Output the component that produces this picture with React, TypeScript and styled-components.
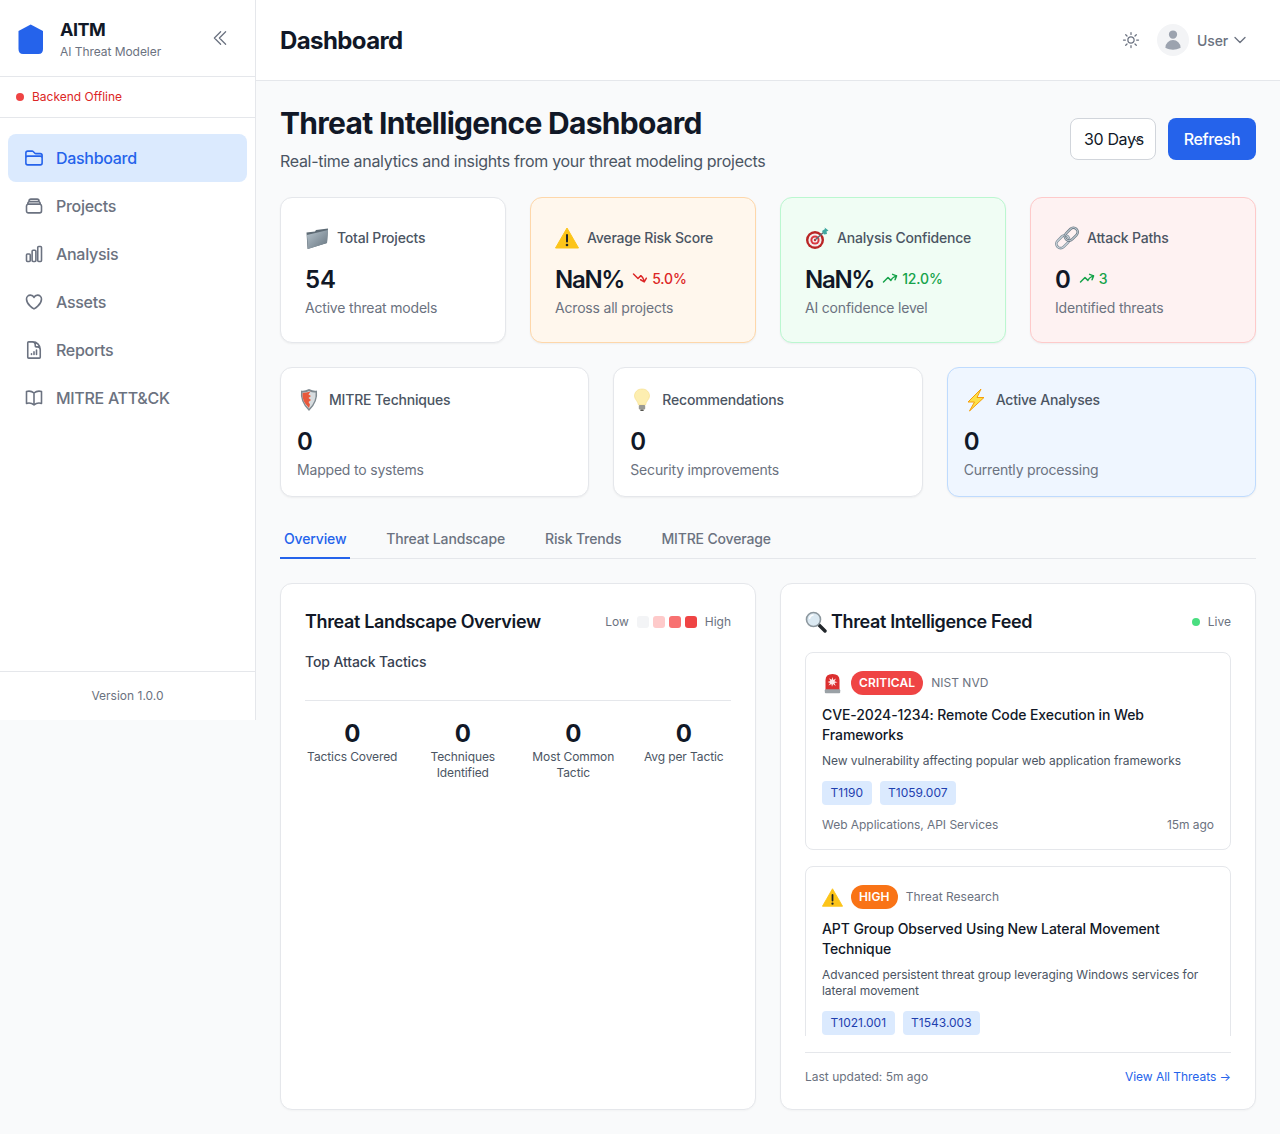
import styled, { createGlobalStyle } from "styled-components";
import {
    HiOutlineFolder,
    HiOutlineRectangleStack,
    HiOutlineChartBar,
    HiOutlineHeart,
    HiOutlineDocumentChartBar,
    HiOutlineBookOpen,
    HiOutlineChevronDoubleLeft,
    HiOutlineSun,
    HiOutlineChevronDown,
    HiOutlineArrowTrendingUp,
    HiOutlineArrowTrendingDown,
    HiUser,
} from "react-icons/hi2";

const GlobalStyle = createGlobalStyle`
    * { box-sizing: border-box; }
    body {
        margin: 0;
        background: #f9fafb;
        font-family: Inter, "Liberation Sans", sans-serif;
        color: #111827;
    }
`;

const Layout = styled.div`
    display: flex;
    align-items: flex-start;
    min-height: 1134px;
`;

const Sidebar = styled.aside`
    width: 256px;
    height: 720px;
    flex-shrink: 0;
    display: flex;
    flex-direction: column;
    background: #fff;
    border-right: 1px solid #e5e7eb;
`;

const Brand = styled.div`
    height: 77px;
    display: flex;
    align-items: center;
    gap: 12px;
    padding: 0 16px;
    border-bottom: 1px solid #e5e7eb;
`;

const BrandText = styled.div`
    flex: 1;
`;

const BrandName = styled.div`
    font-size: 18px;
    line-height: 28px;
    font-weight: 700;
    letter-spacing: -0.5px;
`;

const BrandSub = styled.div`
    font-size: 12px;
    line-height: 16px;
    letter-spacing: -0.05px;
    color: #6b7280;
`;

const Collapse = styled.span`
    display: flex;
    margin-right: 9px;
    color: #6b7280;
    font-size: 20px;
`;

const Status = styled.div`
    height: 41px;
    display: flex;
    align-items: center;
    gap: 8px;
    padding: 0 16px 1px;
    border-bottom: 1px solid #e5e7eb;
    font-size: 12px;
    line-height: 16px;
    color: #dc2626;
`;

const Dot = styled.span<{ $color: string }>`
    width: 8px;
    height: 8px;
    border-radius: 50%;
    background: ${(p) => p.$color};
`;

const Nav = styled.nav`
    flex: 1;
    padding: 16px 8px;
`;

const NavItem = styled.div<{ $active?: boolean }>`
    height: 48px;
    display: flex;
    align-items: center;
    gap: 12px;
    padding: 0 16px;
    border-radius: 8px;
    font-size: 16px;
    font-weight: 500;
    letter-spacing: -0.3px;
    color: ${(p) => (p.$active ? "#2563eb" : "#6b7280")};
    background: ${(p) => (p.$active ? "#dbeafe" : "transparent")};
    svg {
        font-size: 20px;
        stroke-width: 1.9;
    }
`;

const Version = styled.div`
    height: 49px;
    display: flex;
    align-items: center;
    justify-content: center;
    padding-bottom: 1px;
    border-top: 1px solid #e5e7eb;
    font-size: 12px;
    line-height: 16px;
    color: #6b7280;
`;

const Main = styled.div`
    flex: 1;
    min-width: 0;
`;

const TopBar = styled.header`
    height: 81px;
    display: flex;
    align-items: center;
    justify-content: space-between;
    padding: 0 24px;
    background: #fff;
    border-bottom: 1px solid #e5e7eb;
`;

const PageName = styled.h1`
    margin: 0;
    font-size: 24px;
    font-weight: 700;
    letter-spacing: -0.6px;
`;

const TopActions = styled.div`
    display: flex;
    align-items: center;
    color: #6b7280;
`;

const ThemeIcon = styled.span`
    display: flex;
    font-size: 20px;
    margin-right: 16px;
`;

const Avatar = styled.span`
    width: 32px;
    height: 32px;
    display: flex;
    align-items: center;
    justify-content: center;
    border-radius: 50%;
    background: #f3f4f6;
    color: #9ca3af;
    font-size: 22px;
    margin-right: 8px;
`;

const UserName = styled.span`
    font-size: 14px;
    font-weight: 500;
    letter-spacing: -0.15px;
    margin-right: 4px;
`;

const UserCaret = styled.span`
    display: flex;
    font-size: 16px;
    margin-right: 8px;
    svg {
        stroke-width: 2;
    }
`;

const Content = styled.main`
    padding: 24px;
`;

const Heading = styled.div`
    display: flex;
    align-items: center;
    justify-content: space-between;
    margin-bottom: 24px;
`;

const Title = styled.h2`
    margin: 0 0 8px;
    font-size: 30px;
    line-height: 36px;
    font-weight: 700;
    letter-spacing: -0.7px;
`;

const Subtitle = styled.p`
    margin: 0;
    font-size: 16px;
    line-height: 24px;
    letter-spacing: -0.31px;
    color: #4b5563;
`;

const HeadingActions = styled.div`
    display: flex;
    gap: 12px;
`;

const RangeSelect = styled.div`
    position: relative;
    width: 86px;
    height: 42px;
    display: flex;
    align-items: center;
    padding-left: 13px;
    background: #fff;
    border: 1px solid #d1d5db;
    border-radius: 8px;
    font-size: 16px;
    letter-spacing: -0.35px;
    svg {
        position: absolute;
        right: 13px;
        top: 16px;
        font-size: 10px;
        stroke-width: 2.6;
        color: #374151;
    }
`;

const RefreshButton = styled.button`
    width: 88px;
    height: 42px;
    border: none;
    border-radius: 8px;
    background: #2563eb;
    color: #fff;
    font-family: inherit;
    font-size: 16px;
    font-weight: 500;
    letter-spacing: -0.4px;
`;

const StatGrid = styled.div<{ $cols: number; $pad: number }>`
    display: grid;
    grid-template-columns: repeat(${(p) => p.$cols}, 1fr);
    gap: 24px;
    margin-bottom: 24px;
    --pad: ${(p) => p.$pad}px;
`;

const tones = {
    plain: ["#fff", "#e5e7eb"],
    orange: ["#fff7ed", "#fed7aa"],
    green: ["#f0fdf4", "#bbf7d0"],
    red: ["#fef2f2", "#fecaca"],
    blue: ["#eff6ff", "#bfdbfe"],
};

type Tone = keyof typeof tones;

const StatCard = styled.div<{ $tone: Tone }>`
    padding: var(--pad);
    border-radius: 12px;
    background: ${(p) => tones[p.$tone][0]};
    border: 1px solid ${(p) => tones[p.$tone][1]};
    box-shadow: 0 1px 2px rgba(0, 0, 0, 0.05);
`;

const StatHead = styled.div`
    height: 32px;
    display: flex;
    align-items: center;
    gap: 8px;
    margin-bottom: 8px;
    font-size: 14px;
    line-height: 20px;
    font-weight: 500;
    letter-spacing: -0.2px;
    color: #4b5563;
`;

const StatValueRow = styled.div`
    display: flex;
    align-items: center;
    gap: 8px;
    height: 32px;
    margin-bottom: 4px;
`;

const StatValue = styled.span<{ $tight: boolean }>`
    padding-top: 2px;
    font-size: 24px;
    font-weight: 600;
    letter-spacing: ${(p) => (p.$tight ? "-1.3px" : "0")};
`;

const Trend = styled.span<{ $up: boolean }>`
    display: flex;
    align-items: center;
    gap: 4px;
    font-size: 14px;
    font-weight: 500;
    letter-spacing: -0.15px;
    color: ${(p) => (p.$up ? "#16a34a" : "#dc2626")};
    svg {
        font-size: 16px;
        stroke-width: 2.2;
    }
`;

const StatSub = styled.div`
    font-size: 14px;
    line-height: 20px;
    letter-spacing: -0.19px;
    color: #6b7280;
`;

const Tabs = styled.div`
    display: flex;
    gap: 32px;
    border-bottom: 1px solid #e5e7eb;
    margin-bottom: 24px;
`;

const Tab = styled.div<{ $active?: boolean }>`
    padding: 8px 4px;
    margin-bottom: -1px;
    font-size: 14px;
    line-height: 20px;
    font-weight: 500;
    letter-spacing: -0.15px;
    color: ${(p) => (p.$active ? "#2563eb" : "#6b7280")};
    border-bottom: 2px solid ${(p) => (p.$active ? "#2563eb" : "transparent")};
`;

const Panels = styled.div`
    display: grid;
    grid-template-columns: 1fr 1fr;
    gap: 24px;
`;

const Panel = styled.section`
    padding: 24px;
    background: #fff;
    border: 1px solid #e5e7eb;
    border-radius: 12px;
    box-shadow: 0 1px 2px rgba(0, 0, 0, 0.03);
`;

const PanelHead = styled.div`
    height: 28px;
    display: flex;
    align-items: center;
    justify-content: space-between;
    margin-bottom: 16px;
`;

const PanelTitle = styled.h3`
    margin: 0;
    display: flex;
    align-items: center;
    gap: 4px;
    font-size: 18px;
    line-height: 28px;
    font-weight: 600;
    letter-spacing: -0.36px;
`;

const Legend = styled.div`
    display: flex;
    align-items: center;
    gap: 4px;
    font-size: 12px;
    line-height: 16px;
    color: #6b7280;
`;

const LegendLabel = styled.span<{ $side: "left" | "right" }>`
    margin-${(p) => p.$side}: 4px;
`;

const Swatch = styled.span<{ $color: string }>`
    width: 12px;
    height: 12px;
    border-radius: 3px;
    background: ${(p) => p.$color};
`;

const SectionLabel = styled.div`
    font-size: 14px;
    line-height: 20px;
    font-weight: 500;
    letter-spacing: -0.11px;
    color: #374151;
    margin-bottom: 28px;
`;

const Totals = styled.div`
    display: grid;
    grid-template-columns: repeat(4, 1fr);
    gap: 16px;
    padding-top: 16px;
    border-top: 1px solid #e5e7eb;
`;

const Total = styled.div`
    text-align: center;
`;

const TotalValue = styled.div`
    padding-top: 1px;
    margin-bottom: -1px;
    font-size: 24px;
    line-height: 32px;
    font-weight: 700;
`;

const TotalLabel = styled.div`
    font-size: 12px;
    line-height: 16px;
    letter-spacing: -0.1px;
    color: #4b5563;
`;

const LiveTag = styled.div`
    display: flex;
    align-items: center;
    gap: 8px;
    font-size: 12px;
    line-height: 16px;
    color: #6b7280;
`;

const Feed = styled.div`
    height: 384px;
    overflow: hidden;
    display: flex;
    flex-direction: column;
    gap: 16px;
`;

const ThreatCard = styled.article`
    flex-shrink: 0;
    padding: 16px;
    border: 1px solid #e5e7eb;
    border-radius: 8px;
`;

const ThreatHead = styled.div`
    height: 28px;
    display: flex;
    align-items: center;
    gap: 8px;
    margin-bottom: 8px;
`;

const Severity = styled.span<{ $color: string }>`
    padding: 4px 8px;
    border-radius: 999px;
    background: ${(p) => p.$color};
    color: #fff;
    font-size: 12px;
    line-height: 16px;
    font-weight: 600;
    letter-spacing: 0.12px;
`;

const Source = styled.span`
    font-size: 12px;
    line-height: 16px;
    color: #6b7280;
`;

const ThreatTitle = styled.h4`
    margin: 0 0 8px;
    font-size: 14px;
    line-height: 20px;
    font-weight: 500;
    letter-spacing: -0.1px;
`;

const ThreatDesc = styled.p`
    margin: 0 0 12px;
    font-size: 12px;
    line-height: 16px;
    letter-spacing: -0.04px;
    color: #4b5563;
`;

const TagRow = styled.div`
    display: flex;
    gap: 8px;
    margin-bottom: 12px;
`;

const Tag = styled.span`
    padding: 4px 8.5px;
    border-radius: 4px;
    background: #dbeafe;
    color: #1e40af;
    font-size: 12px;
    line-height: 16px;
`;

const ThreatFoot = styled.div`
    display: flex;
    justify-content: space-between;
    font-size: 12px;
    line-height: 16px;
    letter-spacing: -0.04px;
    color: #6b7280;
`;

const PanelFoot = styled.div`
    display: flex;
    align-items: center;
    justify-content: space-between;
    margin-top: 16px;
    padding-top: 16px;
    border-top: 1px solid #e5e7eb;
    font-size: 12px;
    line-height: 16px;
    color: #6b7280;
`;

const ViewAll = styled.a`
    color: #2563eb;
    letter-spacing: -0.03px;
`;

// hand drawn stand-ins for the emoji in the picture
const Shield = () => (
    <svg width="32" height="32" viewBox="0 0 32 32">
        <path d="M14.7 2.5 L27 9 L27 27 Q27 32 22.5 32 L7 32 Q2.5 32 2.5 27 L2.5 9 Z" fill="#2563eb" />
    </svg>
);

const FolderEmoji = () => (
    <svg width="24" height="24" viewBox="0 0 24 24">
        <defs>
            <linearGradient id="fld" x1="0" y1="0" x2="1" y2="1">
                <stop offset="0" stopColor="#b6c3cc" />
                <stop offset="1" stopColor="#66747f" />
            </linearGradient>
        </defs>
        <path d="M1.5 6.5 L10 5.5 L11 4 L23 2.5 L22 17 L2.5 23 Z" fill="#5e6b75" />
        <path d="M2 9 L23 4 L22 17 L3 23 Z" fill="url(#fld)" />
    </svg>
);

const WarningEmoji = ({ size = 24 }: { size?: number }) => (
    <svg width={size} height={size} viewBox="0 0 24 24">
        <path d="M12 2 L23.5 22 L0.5 22 Z" fill="#fcc419" stroke="#fcc419" strokeLinejoin="round" />
        <rect x="11" y="8" width="2" height="8.5" rx="1" fill="#1f2328" />
        <circle cx="12" cy="19" r="1.3" fill="#1f2328" />
    </svg>
);

const TargetEmoji = () => (
    <svg width="24" height="24" viewBox="0 0 24 24">
        <circle cx="10" cy="14" r="9" fill="#b92525" />
        <circle cx="10" cy="14" r="6.6" fill="#f4eeee" />
        <circle cx="10" cy="14" r="4.6" fill="#d9363e" />
        <circle cx="10" cy="14" r="2.6" fill="#f4eeee" />
        <circle cx="10" cy="14" r="1.2" fill="#c92a2a" />
        <path d="M10 14 L19 6" stroke="#5c6b73" strokeWidth="1.4" />
        <path d="M17 5 L20 3 L19.6 1.5 L23.5 4.5 L21.5 5.6 L22 8 L19 8.5 Z" fill="#3fa7a0" />
    </svg>
);

const LinkEmoji = () => (
    <svg width="24" height="24" viewBox="0 0 24 24" fill="none">
        <rect x="0.5" y="11.5" width="14.5" height="8.5" rx="4.2" transform="rotate(-45 7.7 15.7)" stroke="#7f8f9b" strokeWidth="2.6" />
        <rect x="0.5" y="11.5" width="14.5" height="8.5" rx="4.2" transform="rotate(-45 7.7 15.7)" stroke="#d4dde3" strokeWidth="1" />
        <rect x="9" y="4" width="14.5" height="8.5" rx="4.2" transform="rotate(-45 16.2 8.2)" stroke="#6d7b86" strokeWidth="2.6" />
        <rect x="9" y="4" width="14.5" height="8.5" rx="4.2" transform="rotate(-45 16.2 8.2)" stroke="#c3ced6" strokeWidth="1" />
    </svg>
);

const ShieldEmoji = () => (
    <svg width="24" height="24" viewBox="0 0 24 24">
        <path d="M12 1 Q17 3.5 20 2.5 Q21.5 14 12 23 Q2.5 14 4 2.5 Q7 3.5 12 1 Z" fill="#7f8a91" />
        <path d="M12 3 Q16 5 18.6 4.4 Q19.4 13.5 12 20.8 Q4.6 13.5 5.4 4.4 Q8 5 12 3 Z" fill="#d7dcdf" />
        <path d="M5.6 5 Q9 5 13.5 3.6 L11.5 6.5 L14 8 L11.5 10 L14 12 L11.5 14 L13 16.5 L12 20 Q4.5 13 5.6 5 Z" fill="#e8593c" />
    </svg>
);

const BulbEmoji = () => (
    <svg width="24" height="24" viewBox="0 0 24 24">
        <path d="M12 1 C17 1 19.5 4.5 19.5 8 C19.5 11.5 16 13 15.5 17 L8.5 17 C8 13 4.5 11.5 4.5 8 C4.5 4.5 7 1 12 1 Z" fill="#fdeeb0" stroke="#f5dc85" strokeWidth="0.6" />
        <rect x="8.8" y="17" width="6.4" height="4.5" rx="1" fill="#9a9a94" />
        <rect x="10.2" y="21.5" width="3.6" height="1.6" rx="0.8" fill="#55554f" />
    </svg>
);

const BoltEmoji = () => (
    <svg width="24" height="24" viewBox="0 0 24 24">
        <path d="M17 1 L4 14 L10.5 14 L5.5 23 L20 9.5 L13 9.5 Z" fill="#fde047" stroke="#f59e0b" strokeWidth="1" strokeLinejoin="round" />
    </svg>
);

const SearchEmoji = () => (
    <svg width="22" height="22" viewBox="0 0 22 22">
        <path d="M13 13 L20 20" stroke="#22272b" strokeWidth="3.4" strokeLinecap="round" />
        <circle cx="8.5" cy="8.5" r="7" fill="#dbe9f2" stroke="#8c979e" strokeWidth="1.6" />
        <path d="M4.5 8 A4.5 4.5 0 0 1 8.5 4" fill="none" stroke="#fff" strokeWidth="1.4" />
    </svg>
);

const SirenEmoji = () => (
    <svg width="21" height="21" viewBox="0 0 21 21">
        <path d="M3.5 17 L3.5 7 Q3.5 1 10.5 1 Q17.5 1 17.5 7 L17.5 17 Z" fill="#dc2f2f" />
        <rect x="2.8" y="16.2" width="15.4" height="4" rx="1" fill="#9aa1a6" />
        <path d="M10.5 4 L11.3 7 L14 5.5 L12.5 8.3 L15.5 9.2 L12.5 10 L13.7 13 L11.1 11 L10 13.8 L9.4 11 L6.5 12.6 L8.1 10 L5.5 9 L8.3 8 L7.1 5.2 L9.7 6.8 Z" fill="#fde8e8" />
    </svg>
);

const navItems = [
    { label: "Dashboard", Icon: HiOutlineFolder, active: true },
    { label: "Projects", Icon: HiOutlineRectangleStack },
    { label: "Analysis", Icon: HiOutlineChartBar },
    { label: "Assets", Icon: HiOutlineHeart },
    { label: "Reports", Icon: HiOutlineDocumentChartBar },
    { label: "MITRE ATT&CK", Icon: HiOutlineBookOpen },
];

type Stat = {
    label: string;
    value: string;
    sub: string;
    tone: Tone;
    icon: React.ReactNode;
    trend?: { up: boolean; text: string };
};

const topStats: Stat[] = [
    { label: "Total Projects", value: "54", sub: "Active threat models", tone: "plain", icon: <FolderEmoji /> },
    { label: "Average Risk Score", value: "NaN%", sub: "Across all projects", tone: "orange", icon: <WarningEmoji />, trend: { up: false, text: "5.0%" } },
    { label: "Analysis Confidence", value: "NaN%", sub: "AI confidence level", tone: "green", icon: <TargetEmoji />, trend: { up: true, text: "12.0%" } },
    { label: "Attack Paths", value: "0", sub: "Identified threats", tone: "red", icon: <LinkEmoji />, trend: { up: true, text: "3" } },
];

const lowerStats: Stat[] = [
    { label: "MITRE Techniques", value: "0", sub: "Mapped to systems", tone: "plain", icon: <ShieldEmoji /> },
    { label: "Recommendations", value: "0", sub: "Security improvements", tone: "plain", icon: <BulbEmoji /> },
    { label: "Active Analyses", value: "0", sub: "Currently processing", tone: "blue", icon: <BoltEmoji /> },
];

type Threat = {
    icon: React.ReactNode;
    severity: string;
    color: string;
    source: string;
    title: string;
    desc: string;
    tags: string[];
    affected?: string;
    time?: string;
};

// the second card runs under the bottom of the feed, so its footer never shows
const threats: Threat[] = [
    {
        icon: <SirenEmoji />,
        severity: "CRITICAL",
        color: "#ef4444",
        source: "NIST NVD",
        title: "CVE-2024-1234: Remote Code Execution in Web Frameworks",
        desc: "New vulnerability affecting popular web application frameworks",
        tags: ["T1190", "T1059.007"],
        affected: "Web Applications, API Services",
        time: "15m ago",
    },
    {
        icon: <WarningEmoji size={21} />,
        severity: "HIGH",
        color: "#f97316",
        source: "Threat Research",
        title: "APT Group Observed Using New Lateral Movement Technique",
        desc: "Advanced persistent threat group leveraging Windows services for lateral movement",
        tags: ["T1021.001", "T1543.003"],
    },
];

const StatBlock = ({ stat }: { stat: Stat }) => (
    <StatCard $tone={stat.tone}>
        <StatHead>
            {stat.icon}
            {stat.label}
        </StatHead>
        <StatValueRow>
            <StatValue $tight={stat.value.length > 2}>{stat.value}</StatValue>
            {stat.trend && (
                <Trend $up={stat.trend.up}>
                    {stat.trend.up ? <HiOutlineArrowTrendingUp /> : <HiOutlineArrowTrendingDown />}
                    {stat.trend.text}
                </Trend>
            )}
        </StatValueRow>
        <StatSub>{stat.sub}</StatSub>
    </StatCard>
);

export default function App() {
    return (
        <Layout>
            <GlobalStyle />
            <Sidebar>
                <Brand>
                    <Shield />
                    <BrandText>
                        <BrandName>AITM</BrandName>
                        <BrandSub>AI Threat Modeler</BrandSub>
                    </BrandText>
                    <Collapse>
                        <HiOutlineChevronDoubleLeft />
                    </Collapse>
                </Brand>
                <Status>
                    <Dot $color="#ef4444" />
                    Backend Offline
                </Status>
                <Nav>
                    {navItems.map(({ label, Icon, active }) => (
                        <NavItem key={label} $active={active}>
                            <Icon />
                            {label}
                        </NavItem>
                    ))}
                </Nav>
                <Version>Version 1.0.0</Version>
            </Sidebar>
            <Main>
                <TopBar>
                    <PageName>Dashboard</PageName>
                    <TopActions>
                        <ThemeIcon>
                            <HiOutlineSun />
                        </ThemeIcon>
                        <Avatar>
                            <HiUser />
                        </Avatar>
                        <UserName>User</UserName>
                        <UserCaret>
                            <HiOutlineChevronDown />
                        </UserCaret>
                    </TopActions>
                </TopBar>
                <Content>
                    <Heading>
                        <div>
                            <Title>Threat Intelligence Dashboard</Title>
                            <Subtitle>Real-time analytics and insights from your threat modeling projects</Subtitle>
                        </div>
                        <HeadingActions>
                            <RangeSelect>
                                30 Days
                                <HiOutlineChevronDown />
                            </RangeSelect>
                            <RefreshButton>Refresh</RefreshButton>
                        </HeadingActions>
                    </Heading>
                    <StatGrid $cols={4} $pad={24}>
                        {topStats.map((s) => (
                            <StatBlock key={s.label} stat={s} />
                        ))}
                    </StatGrid>
                    <StatGrid $cols={3} $pad={16}>
                        {lowerStats.map((s) => (
                            <StatBlock key={s.label} stat={s} />
                        ))}
                    </StatGrid>
                    <Tabs>
                        <Tab $active>Overview</Tab>
                        <Tab>Threat Landscape</Tab>
                        <Tab>Risk Trends</Tab>
                        <Tab>MITRE Coverage</Tab>
                    </Tabs>
                    <Panels>
                        <Panel>
                            <PanelHead>
                                <PanelTitle>Threat Landscape Overview</PanelTitle>
                                <Legend>
                                    <LegendLabel $side="right">Low</LegendLabel>
                                    <Swatch $color="#f3f4f6" />
                                    <Swatch $color="#fecaca" />
                                    <Swatch $color="#f87171" />
                                    <Swatch $color="#ef4444" />
                                    <LegendLabel $side="left">High</LegendLabel>
                                </Legend>
                            </PanelHead>
                            <SectionLabel>Top Attack Tactics</SectionLabel>
                            <Totals>
                                <Total>
                                    <TotalValue>0</TotalValue>
                                    <TotalLabel>Tactics Covered</TotalLabel>
                                </Total>
                                <Total>
                                    <TotalValue>0</TotalValue>
                                    <TotalLabel>Techniques Identified</TotalLabel>
                                </Total>
                                <Total>
                                    <TotalValue>0</TotalValue>
                                    <TotalLabel>Most Common Tactic</TotalLabel>
                                </Total>
                                <Total>
                                    <TotalValue>0</TotalValue>
                                    <TotalLabel>Avg per Tactic</TotalLabel>
                                </Total>
                            </Totals>
                        </Panel>
                        <Panel>
                            <PanelHead>
                                <PanelTitle>
                                    <SearchEmoji />
                                    Threat Intelligence Feed
                                </PanelTitle>
                                <LiveTag>
                                    <Dot $color="#4ade80" />
                                    Live
                                </LiveTag>
                            </PanelHead>
                            <Feed>
                                {threats.map((t) => (
                                    <ThreatCard key={t.title}>
                                        <ThreatHead>
                                            {t.icon}
                                            <Severity $color={t.color}>{t.severity}</Severity>
                                            <Source>{t.source}</Source>
                                        </ThreatHead>
                                        <ThreatTitle>{t.title}</ThreatTitle>
                                        <ThreatDesc>{t.desc}</ThreatDesc>
                                        <TagRow>
                                            {t.tags.map((tag) => (
                                                <Tag key={tag}>{tag}</Tag>
                                            ))}
                                        </TagRow>
                                        {t.affected && (
                                            <ThreatFoot>
                                                <span>{t.affected}</span>
                                                <span>{t.time}</span>
                                            </ThreatFoot>
                                        )}
                                    </ThreatCard>
                                ))}
                            </Feed>
                            <PanelFoot>
                                <span>Last updated: 5m ago</span>
                                <ViewAll>View All Threats →</ViewAll>
                            </PanelFoot>
                        </Panel>
                    </Panels>
                </Content>
            </Main>
        </Layout>
    );
}
